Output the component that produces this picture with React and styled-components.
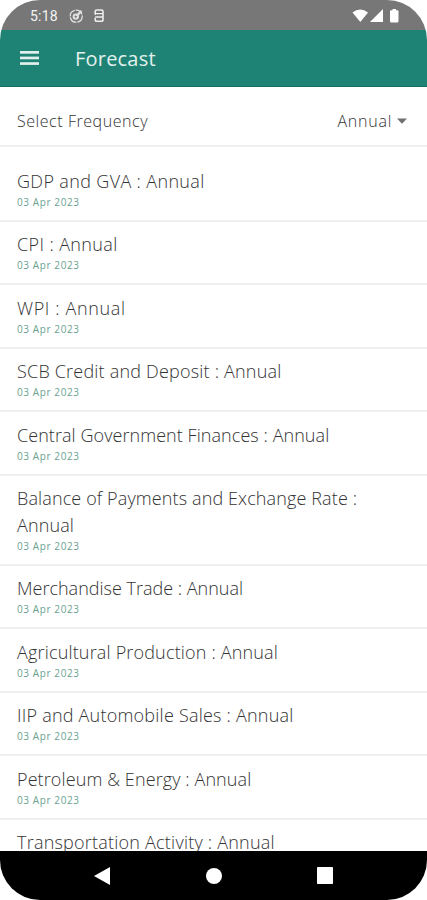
import styled, { createGlobalStyle } from "styled-components";

const forecasts = [
  { title: "GDP and GVA : Annual", date: "03 Apr 2023", spacing: 0.35 },
  { title: "CPI : Annual", date: "03 Apr 2023", spacing: 0.38 },
  { title: "WPI : Annual", date: "03 Apr 2023", spacing: 0.63 },
  { title: "SCB Credit and Deposit : Annual", date: "03 Apr 2023", spacing: 0.2 },
  { title: "Central Government Finances : Annual", date: "03 Apr 2023", spacing: 0.06 },
  { title: "Balance of Payments and Exchange Rate : Annual", date: "03 Apr 2023", spacing: 0.12 },
  { title: "Merchandise Trade : Annual", date: "03 Apr 2023", spacing: 0 },
  { title: "Agricultural Production : Annual", date: "03 Apr 2023", spacing: 0.17 },
  { title: "IIP and Automobile Sales : Annual", date: "03 Apr 2023", spacing: 0.22 },
  { title: "Petroleum & Energy : Annual", date: "03 Apr 2023", spacing: 0.1 },
  { title: "Transportation Activity : Annual", spacing: 0.22 },
];

const App = () => {
  return (
    <>
      <GlobalStyle />
      <Phone>
        <StatusBar>
          <Time>5:18</Time>
          <svg width="15" height="16" viewBox="0 0 15 16" fill="none" stroke="#e0e0e0">
            <circle cx="7.2" cy="8.2" r="6" strokeWidth="1.3" strokeDasharray="8 1" />
            <circle cx="6.8" cy="8.6" r="2.2" strokeWidth="2" />
            <path d="M7.5 8 L12.5 2.8" strokeWidth="2.4" />
          </svg>
          <SyncIcon width="10" height="14" viewBox="0 0 10 14" fill="none" stroke="#ededed" strokeWidth="1.6">
            <path d="M1.2 5.8 V2.6 Q1.2 1 2.8 1 H7.4 Q9 1 9 2.6 V10.4 Q9 12.2 7.4 12.2 H2.8 Q1.2 12.2 1.2 10.4 V8.8" />
            <path d="M1.2 4.6 H9 M1.2 8 H9" strokeWidth="1.3" />
          </SyncIcon>
          <StatusIcons width="48" height="16" viewBox="0 0 48 16" fill="#fff">
            <path d="M0.5 4.4 Q8.3 -1.6 16 4.4 L8.3 14 Z" />
            <path d="M31 1 V14 H18 Z" />
            <path d="M40.5 1 H44 V2.2 H45.5 Q46.5 2.2 46.5 3.4 V13 Q46.5 14.5 45.2 14.5 H39.2 Q38 14.5 38 13 V3.4 Q38 2.2 39 2.2 H40.5 Z" />
          </StatusIcons>
        </StatusBar>
        <Header>
          <svg width="19" height="14" viewBox="0 0 19 14" fill="#e0efec">
            <rect width="19" height="2.7" y="0" />
            <rect width="19" height="2.7" y="5.6" />
            <rect width="19" height="2.7" y="11.2" />
          </svg>
          <HeaderTitle>Forecast</HeaderTitle>
        </Header>
        <Frequency>
          <span>Select Frequency</span>
          <Select>
            Annual
            <svg width="10" height="6" viewBox="0 0 10 6">
              <path d="M0 0.5 H10 L5 5.7 Z" fill="#707070" />
            </svg>
          </Select>
        </Frequency>
        <List>
          {forecasts.map((item) => (
            <Row key={item.title}>
              <Title $spacing={item.spacing}>{item.title}</Title>
              {item.date && <DateText>{item.date}</DateText>}
            </Row>
          ))}
        </List>
        <NavBar>
          <svg width="16" height="18" viewBox="0 0 16 18" fill="#fff">
            <path d="M0 9 L16 0 V18 Z" />
          </svg>
          <svg width="16" height="16" viewBox="0 0 16 16" fill="#fff">
            <circle cx="8" cy="8" r="8" />
          </svg>
          <svg width="16" height="17" viewBox="0 0 16 17" fill="#fff">
            <rect width="16" height="17" rx="0.8" />
          </svg>
        </NavBar>
      </Phone>
    </>
  );
};

export default App;

const GlobalStyle = createGlobalStyle`
  * {
    box-sizing: border-box;
  }

  body {
    margin: 0;
    background-color: #fff;
    font-family: "Open Sans", "Noto Sans", sans-serif;
  }

  svg {
    display: block;
    flex-shrink: 0;
  }
`;

const Phone = styled.div`
  width: 427px;
  height: 900px;
  display: flex;
  flex-direction: column;
  overflow: hidden;
  border-radius: 40px;
  background-color: #fff;
`;

const StatusBar = styled.div`
  height: 30px;
  flex-shrink: 0;
  display: flex;
  align-items: center;
  padding: 2px 27px 0 30px;
  background-color: #777;
`;

const Time = styled.span`
  width: 39px;
  font-family: Roboto, sans-serif;
  font-size: 14px;
  letter-spacing: 0.2px;
  color: #f4f4f4;
`;

const SyncIcon = styled.svg`
  margin-left: 10px;
`;

const StatusIcons = styled.svg`
  margin-left: auto;
`;

const Header = styled.header`
  height: 57px;
  flex-shrink: 0;
  display: flex;
  align-items: center;
  gap: 36px;
  padding-left: 20px;
  background-color: #1e8375;
  border-bottom: 1px solid #13705f;
`;

const HeaderTitle = styled.h1`
  margin: 0;
  font-size: 20px;
  font-weight: 400;
  letter-spacing: 0.2px;
  color: #e4f1ee;
`;

const Frequency = styled.div`
  height: 60px;
  flex-shrink: 0;
  display: flex;
  align-items: center;
  justify-content: space-between;
  padding: 10px 20px 0 17px;
  border-bottom: 2px solid #f0f0f0;
  font-size: 16px;
  font-weight: 300;
  letter-spacing: 0.55px;
  color: #333;
`;

const Select = styled.div`
  display: flex;
  align-items: center;
  gap: 5px;
  letter-spacing: 0.75px;
`;

const List = styled.div`
  flex: 1;
  min-height: 0;
  overflow: hidden;
  padding-top: 11px;
`;

const Row = styled.div`
  padding: 9.5px 17px 11px;
  border-bottom: 2px solid #efefef;
`;

const Title = styled.div`
  padding-bottom: 0.5px;
  font-size: 18px;
  line-height: 26.5px;
  font-weight: 300;
  letter-spacing: ${(props) => props.$spacing}px;
  color: #333;
`;

const DateText = styled.div`
  font-size: 10px;
  line-height: 14px;
  letter-spacing: 0.6px;
  color: #6aa292;
`;

const NavBar = styled.nav`
  height: 49px;
  flex-shrink: 0;
  display: flex;
  align-items: center;
  justify-content: space-between;
  padding: 0 94px;
  background-color: #000;
`;
